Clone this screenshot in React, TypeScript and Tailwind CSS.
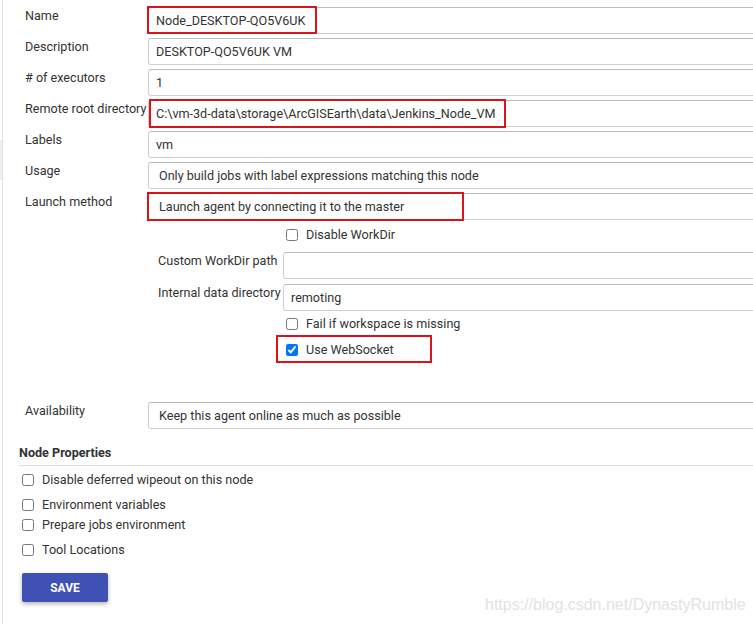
import React from "react";

const LABEL = "w-[123px] shrink-0 pt-[1px] leading-[16px] text-[#333] whitespace-nowrap";
const FIELD =
  "h-[27px] w-[640px] shrink-0 rounded-[3px] border border-[#cfcfcf] border-t-[#bdbdbd] bg-white pl-[7px] leading-[25px] text-[#333] whitespace-nowrap";

function Mark({ className }: { className: string }) {
  // red annotation box drawn over the screenshot
  return <div className={`pointer-events-none absolute border-2 border-[#d9141b] ${className}`} />;
}

function Row({ label, value, pad = "pl-[7px]", mark }: { label: string; value: string; pad?: string; mark?: string }) {
  return (
    <div className="flex mb-[4px]">
      <div className={LABEL}>{label}</div>
      <div className="relative">
        <div className={`${FIELD} ${pad}`}>{value}</div>
        {mark && <Mark className={mark} />}
      </div>
    </div>
  );
}

function Check({ checked = false, label }: { checked?: boolean; label: string }) {
  return (
    <label className="flex items-center h-[18px]">
      <input type="checkbox" checked={checked} readOnly className="m-0 w-[12px] h-[12px] accent-[#0075ff]" />
      <span className="ml-[8px] text-[#333] leading-[16px] whitespace-nowrap">{label}</span>
    </label>
  );
}

export default function App() {
  return (
    <div className="relative w-[753px] h-[624px] overflow-hidden bg-white font-['Roboto',sans-serif] text-[12.6px]">
      <div className="flex h-full">
        <div className="w-[2px] shrink-0">
          <div className="mt-[140px] h-[40px] bg-[#eeeeee]" />
        </div>
        <div className="flex-1 border-l border-[#e3e3e3] pt-[7px]">
          <div className="pl-[22px]">
            <Row label="Name" value="Node_DESKTOP-QO5V6UK" mark="-left-[1px] -top-[1px] w-[170px] h-[28px]" />
            <Row label="Description" value="DESKTOP-QO5V6UK VM" />
            <Row label="# of executors" value="1" />
            <Row
              label="Remote root directory"
              value="C:\vm-3d-data\storage\ArcGISEarth\data\Jenkins_Node_VM"
              mark="left-[1px] -top-[1px] w-[357px] h-[29px]"
            />
            <Row label="Labels" value="vm" />
            <Row label="Usage" value="Only build jobs with label expressions matching this node" pad="pl-[10px]" />
            <Row
              label="Launch method"
              value="Launch agent by connecting it to the master"
              pad="pl-[10px]"
              mark="-left-[1px] -top-[1px] w-[317px] h-[29px]"
            />

            {/* launcher options */}
            <div className="ml-[133px] mt-[6px]">
              <div className="ml-[128px]">
                <Check label="Disable WorkDir" />
              </div>
              <div className="flex mt-[8px]">
                <div className="w-[125px] shrink-0 pt-[1px] leading-[16px] text-[#333] whitespace-nowrap">Custom WorkDir path</div>
                <div className={`${FIELD} w-[520px]`} />
              </div>
              <div className="flex mt-[5px]">
                <div className="w-[125px] shrink-0 pt-[1px] leading-[16px] text-[#333] whitespace-nowrap">Internal data directory</div>
                <div className={`${FIELD} w-[520px]`}>remoting</div>
              </div>
              <div className="ml-[128px] mt-[4px]">
                <Check label="Fail if workspace is missing" />
              </div>
              <div className="relative ml-[128px] mt-[8px]">
                <Check checked label="Use WebSocket" />
                <Mark className="-left-[10px] -top-[6px] w-[156px] h-[28px]" />
              </div>
            </div>

            <div className="flex mt-[43px]">
              <div className={`${LABEL} pt-[0px]`}>Availability</div>
              <div className={`${FIELD} pl-[10px]`}>Keep this agent online as much as possible</div>
            </div>
          </div>

          <div className="pl-[16px] mt-[16px]">
            <div className="font-bold text-[#333] leading-[16px]">Node Properties</div>
            <div className="mt-[4px] border-t border-[#dddddd]" />
            <div className="pl-[3px] mt-[5px]">
              <Check label="Disable deferred wipeout on this node" />
              <div className="mt-[7px]">
                <Check label="Environment variables" />
              </div>
              <div className="mt-[2px]">
                <Check label="Prepare jobs environment" />
              </div>
              <div className="mt-[7px]">
                <Check label="Tool Locations" />
              </div>
              <button className="mt-[14px] w-[86px] h-[29px] rounded-[2px] bg-[#3f51b5] text-white text-[12px] font-bold shadow-[0_2px_4px_rgba(0,0,0,0.3)]">
                SAVE
              </button>
            </div>
          </div>
        </div>
      </div>

      <div className="absolute left-[485px] top-[596px] font-['Liberation_Sans',sans-serif] text-[16px] leading-[18px] text-[#e2e2e2]">
        https://blog.csdn.net/DynastyRumble
      </div>
    </div>
  );
}
